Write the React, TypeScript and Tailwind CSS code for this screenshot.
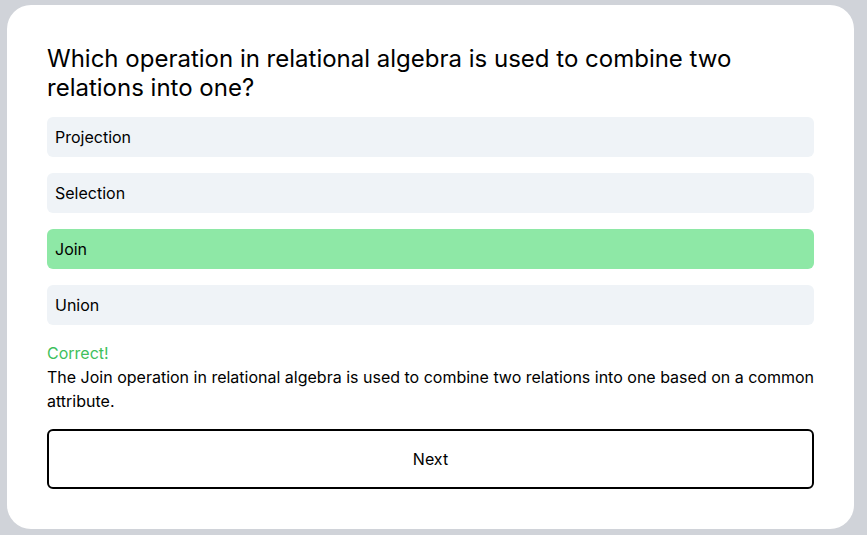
import React from "react";

const options = ["Projection", "Selection", "Join", "Union"];

export default function App() {
  return (
    <div
      className="min-h-screen w-full bg-[#d0d3d9] pt-[5px] pl-[7px] pb-[6px]"
      style={{ fontFamily: "Inter, 'Noto Sans', sans-serif" }}
    >
      <div className="w-[847px] rounded-3xl bg-white px-10 pt-[39px] pb-10 text-black">
        <h1 className="mb-[15px] text-2xl leading-[29px] font-normal">
          Which operation in relational algebra is used to combine two relations into one?
        </h1>
        <div className="flex flex-col gap-4">
          {options.map((o) => (
            <div
              key={o}
              className={
                o === "Join"
                  ? "flex h-10 items-center rounded-md bg-[#8ee8a6] px-2 text-base"
                  : "flex h-10 items-center rounded-md bg-[#eff3f7] px-2 text-base"
              }
            >
              {o}
            </div>
          ))}
        </div>
        <div className="mt-4 text-base leading-6 text-[#3fbf5c]">Correct!</div>
        <p className="text-base leading-6">
          The Join operation in relational algebra is used to combine two relations into one based on a common attribute.
        </p>
        <button className="mt-4 w-full rounded-md border-2 border-black bg-white py-4 text-base leading-6">
          Next
        </button>
      </div>
    </div>
  );
}
